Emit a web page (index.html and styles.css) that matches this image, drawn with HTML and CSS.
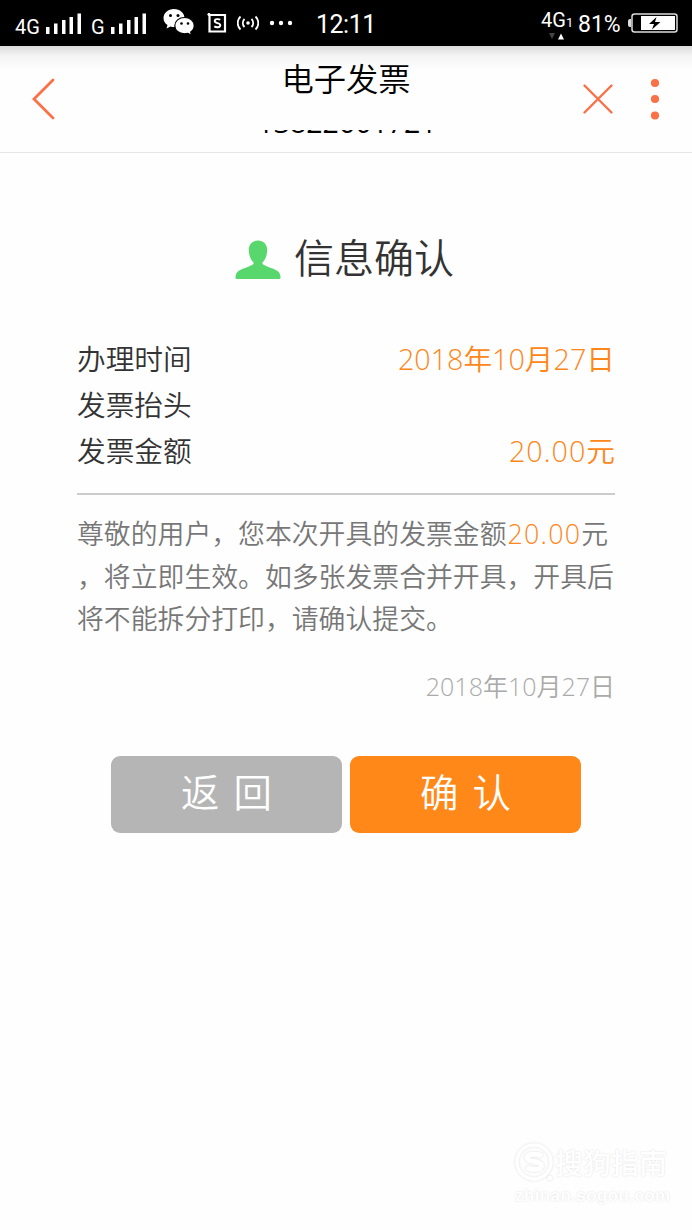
FILE: index.html
```html
<!DOCTYPE html>
<html lang="zh-CN">
<head>
    <meta charset="UTF-8">
    <meta name="viewport" content="width=device-width, initial-scale=1.0">
    <title>电子发票</title>
    <link rel="stylesheet" href="styles.css">
</head>
<body>
    <div class="status-bar">
        <span class="net net-4g">4G</span>
        <svg class="signal" width="36" height="22" viewBox="0 0 36 22" fill="#fff">
            <path d="M0 14h3.500v7H0zM8 10.500h3.500V21H8zM16 7h3.500v14h-3.500zM23.500 4h3.500v17h-3.500zM31.500 0.500h3.500V21h-3.500z"/>
        </svg>
        <span class="net net-g">G</span>
        <svg class="signal" width="36" height="22" viewBox="0 0 36 22" fill="#fff">
            <path d="M0 14h3.500v7H0zM8 10.500h3.500V21H8zM16 7h3.500v14h-3.500zM23.500 4h3.500v17h-3.500zM31.500 0.500h3.500V21h-3.500z"/>
        </svg>
        <!-- 微信 -->
        <svg class="wechat" width="32" height="28" viewBox="0 0 32 28">
            <path fill="#fff" d="M11 1C5 1 0.500 5 0.500 10c0 3 1.500 5.400 4 7l-1 3.500 4-2c1.200.4 2.400.5 3.500.5 6 0 10.500-4 10.500-9S17 1 11 1z"/>
            <path fill="#fff" stroke="#000" stroke-width="1.200" d="M21.500 9.500c-5.500 0-9.700 3.500-9.700 8.200s4.200 8.100 9.700 8.100c1.200 0 2.300-.2 3.400-.5l3.600 2-.8-3.300c2.200-1.500 3.500-3.700 3.500-6.300 0-4.700-4.200-8.200-9.700-8.200z"/>
            <circle cx="7.500" cy="7.500" r="1.500"/>
            <circle cx="15" cy="7.500" r="1.500"/>
            <circle cx="18.500" cy="15.500" r="1.300"/>
            <circle cx="25" cy="15.500" r="1.300"/>
        </svg>
        <svg class="app-s" width="20" height="22" viewBox="0 0 20 22" fill="none" stroke="#fff">
            <path stroke-width="2.200" d="M2.500 3H18v16.500H2.500z"/>
            <circle cx="2" cy="2.500" r="1.200" fill="#fff"/>
            <path stroke-width="1.900" d="M13.200 7.800c-1-.8-5.500-1.500-5.500 1.200 0 2.800 5.600 1.400 5.600 4.300 0 2.700-4.600 2.300-6 1"/>
        </svg>
        <svg class="hotspot" width="22" height="16" viewBox="0 0 22 16" fill="none" stroke="#fff" stroke-width="1.800">
            <circle cx="11" cy="8" r="1.800" fill="#fff" stroke="none"/>
            <path d="M7.500 4a5.500 5.500 0 0 0 0 8M14.500 4a5.500 5.500 0 0 1 0 8M3.500 1.500a9 9 0 0 0 0 13M18.500 1.500a9 9 0 0 1 0 13"/>
        </svg>
        <svg class="more" width="24" height="6" viewBox="0 0 24 6" fill="#fff">
            <circle cx="3" cy="3" r="2.200"/>
            <circle cx="12" cy="3" r="2.200"/>
            <circle cx="21" cy="3" r="2.200"/>
        </svg>
        <span class="clock">12:11</span>
        <div class="data">
            <span class="data-label">4G<small>1</small></span>
            <svg class="arrows" width="16" height="7" viewBox="0 0 16 7">
                <path fill="#444" d="M0 0h6L3 6z"/>
                <path fill="#fff" d="M9 6.500h6L12 0.500z"/>
            </svg>
        </div>
        <span class="percent">81%</span>
        <svg class="battery" width="51" height="20" viewBox="0 0 51 20">
            <path fill="#ddd" d="M3 6v8H2Q0 14 0 12V8Q0 6 2 6z"/>
            <rect x="4" y="1" width="45" height="18" rx="2.500" fill="#000" stroke="#ddd" stroke-width="1.500"/>
            <path fill="#fff" d="M13 3h34v14H13z"/>
            <path d="M28.500 4L21 11h5l-2 5.500 8.500-7.500h-5.500z"/>
        </svg>
    </div>

    <header class="nav">
        <svg class="back" width="24" height="42" viewBox="0 0 24 42" fill="none" stroke="#fa7148" stroke-width="2.800" stroke-linecap="round">
            <path d="M21 2L2 21 21 40"/>
        </svg>
        <div class="nav-center">
            <h1>电子发票</h1>
            <div class="phone">13822601721</div>
        </div>
        <div class="nav-actions">
            <svg width="32" height="32" viewBox="0 0 32 32" fill="none" stroke="#fa7148" stroke-width="2.400" stroke-linecap="round">
                <path d="M2.500 2.500l27 27M29.500 2.500l-27 27"/>
            </svg>
            <svg width="10" height="42" viewBox="0 0 10 42" fill="#fa7148">
                <circle cx="5" cy="5" r="4.100"/>
                <circle cx="5" cy="21" r="4.100"/>
                <circle cx="5" cy="37.500" r="4.100"/>
            </svg>
        </div>
    </header>

    <main class="content">
        <div class="heading">
            <svg width="46" height="40" viewBox="0 0 46 40" fill="#58d76c">
                <path d="M23 0.500c-5.300 0-9.200 3.700-9.200 9.500 0 5 1.700 9.500 4.700 12.500v1.500C15 27 5 28.500 2 32.500 0.800 34 0.500 36 0.500 38q0 1 1.500 1h42q1.500 0 1.500-1c0-2-.3-4-1.500-5.500C41 28.500 31 27 27.500 24v-1.500c3-3 4.700-7.500 4.700-12.500 0-5.800-3.900-9.500-9.200-9.500z"/>
            </svg>
            <h2>信息确认</h2>
        </div>

        <div class="info">
            <div class="row"><span>办理时间</span><span class="orange">2018年10月27日</span></div>
            <div class="row"><span>发票抬头</span></div>
            <div class="row"><span>发票金额</span><span class="orange amount">20.00元</span></div>
        </div>

        <p class="message">尊敬的用户，您本次开具的发票金额<span class="orange sum">20.00</span>元<br>，将立即生效。如多张发票合并开具，开具后<br>将不能拆分打印，请确认提交。</p>
        <p class="date">2018年10月27日</p>

        <div class="buttons">
            <button class="btn btn-back">返 回</button>
            <button class="btn btn-ok">确 认</button>
        </div>
    </main>

    <footer class="watermark">
        <div class="brand">
            <svg width="40" height="42" viewBox="0 0 40 42" fill="none" stroke="#fff">
                <circle cx="19" cy="20" r="17" stroke-width="3.500"/>
                <path stroke-width="5" d="M27 14c-3-2-15-3-15 1.500 0 5 14.500 3 14.500 8.500 0 4.500-11 4-15 1.500"/>
                <circle cx="35" cy="36" r="2.500" fill="#fff" stroke="none"/>
            </svg>
            <span>搜狗指南</span>
        </div>
        <div class="site">zhinan.sogou.com</div>
    </footer>
</body>
</html>
```

FILE: styles.css
```css
* {
    margin: 0;
    padding: 0;
    box-sizing: border-box;
}

body {
    display: flex;
    flex-direction: column;
    height: 1230px;
    font-family: "Open Sans", "Noto Sans CJK SC", sans-serif;
    font-weight: 350;
    background: #fefefe;
    color: #333;
    overflow: hidden;
}

svg {
    display: block;
    flex-shrink: 0;
}

h1, h2 {
    font-weight: inherit;
}

/* 状态栏 */
.status-bar {
    display: flex;
    align-items: flex-start;
    height: 46px;
    padding-left: 15px;
    background: #000;
    color: #fff;
    font-family: Roboto, sans-serif;
    font-weight: 400;
    white-space: nowrap;
}

.net {
    margin-top: 16px;
    font-size: 20px;
    line-height: 22px;
}

.net-4g {
    width: 31px;
}

.net-g {
    width: 20px;
    margin-left: 9px;
}

.signal {
    margin-top: 13px;
}

.wechat {
    margin: 8px 0 0 16px;
}

.app-s {
    margin: 12px 0 0 12px;
}

.hotspot {
    margin: 15px 0 0 10px;
}

.more {
    margin: 20px 0 0 10px;
}

.clock {
    width: 60px;
    margin: 11px 0 0 23px;
    font-size: 25px;
    line-height: 28px;
    letter-spacing: -0.500px;
}

.data {
    width: 33px;
    margin: 10px 0 0 165px;
}

.data-label {
    display: block;
    font-size: 20px;
    line-height: 20px;
}

.data-label small {
    font-size: 13px;
}

.arrows {
    margin-left: 8px;
}

.percent {
    width: 49px;
    margin: 11px 0 0 4px;
    font-size: 23px;
    line-height: 27px;
}

.battery {
    margin: 13px 0 0 1px;
}

/* 标题栏 */
.nav {
    display: flex;
    height: 107px;
    padding: 0 32px;
    border-bottom: 1px solid #e6e6e6;
    background: linear-gradient(#dcdcdc, #f4f4f4 10px, #fefefe 24px);
}

.back {
    margin-top: 32px;
}

.nav-center {
    width: 186px;
    margin-left: 198px;
    text-align: center;
    color: #000;
}

.nav-center h1 {
    height: 66px;
    padding-top: 9px;
    font-size: 32.300px;
    line-height: 46px;
    margin-right: 2px;
}

/* 只露出号码底部 */
.phone {
    height: 24px;
    clip-path: inset(18px 0 0 0);
    font-size: 28.500px;
    font-weight: 400;
    line-height: 20px;
}

.nav-actions {
    display: flex;
    align-items: center;
    gap: 36px;
    height: 106px;
    margin-left: auto;
}

/* 内容 */
.content {
    padding: 0 77px;
}

.heading {
    display: flex;
    justify-content: center;
    height: 183px;
    padding: 87px 3px 0 0;
    gap: 13px;
}

.heading h2 {
    margin-top: -11px;
    font-size: 40px;
    line-height: 58px;
}

.row {
    display: flex;
    justify-content: space-between;
    height: 46px;
    font-size: 28.700px;
    line-height: 46px;
}

.info {
    height: 159px;
    border-bottom: 2px solid #ccc;
}

.orange {
    color: #ff8619;
}

.row .amount {
    letter-spacing: 1px;
    margin-right: -1px;
}

.message {
    margin-top: 18px;
    font-size: 26.850px;
    line-height: 42.600px;
    color: #777;
    white-space: nowrap;
}

.sum {
    margin-left: 1px;
    letter-spacing: 1.200px;
}

.date {
    margin-top: 25px;
    font-size: 25px;
    line-height: 40px;
    text-align: right;
    color: #aaa;
}

.buttons {
    display: flex;
    justify-content: center;
    gap: 8px;
    margin-top: 50px;
}

.btn {
    width: 231px;
    height: 77px;
    padding-bottom: 4px;
    border: 0;
    border-radius: 9px;
    font-family: inherit;
    font-size: 38.400px;
    font-weight: inherit;
    line-height: 56px;
    word-spacing: 4px;
    color: #fff;
}

.btn-back {
    background: #b5b5b5;
}

.btn-ok {
    background: #ff8819;
}

/* 水印 */
.watermark {
    width: 155px;
    margin: auto 22px 22px auto;
    color: #fff;
    font-weight: 500;
    text-shadow: 0 0 2px #ddd;
}

.brand {
    display: flex;
    align-items: center;
    font-size: 28px;
    line-height: 42px;
    white-space: nowrap;
}

.brand svg {
    filter: drop-shadow(0 0 1px #ddd);
}

.site {
    font-family: "Liberation Sans", sans-serif;
    font-size: 17px;
    font-weight: bold;
    line-height: 24px;
    letter-spacing: 0.400px;
}
```
